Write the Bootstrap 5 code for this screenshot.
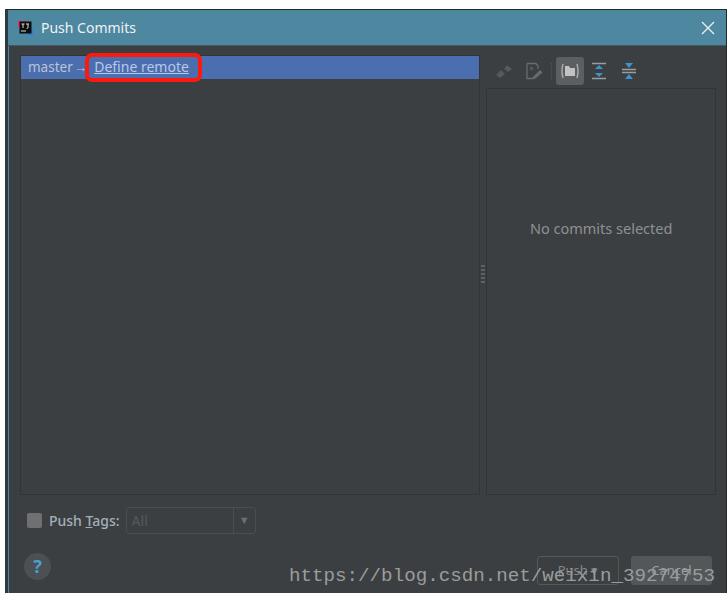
<!DOCTYPE html>
<html lang="en">
<head>
    <meta charset="UTF-8">
    <title>Push Commits</title>
    <link href="https://cdn.jsdelivr.net/npm/bootstrap@5.3.3/dist/css/bootstrap.min.css" rel="stylesheet">
    <style>
        html, body { height: 100%; background: #fff; overflow: hidden; }
        body { padding: 9px 0 0 5px; font-family: "Noto Sans", "Open Sans", sans-serif; font-size: 13px; }
        .ide-window { height: 584px; background: #3c3f41; border: 1px solid #23282b; border-left: 3px solid #2f3a40; border-bottom: 0; color: #bbb; position: relative; box-shadow: inset 1px 0 0 #4e87a0; }
        .ide-title { height: 36px; background: #4e87a0; color: #eef3f5; padding: 0 9px 0 10px; font-size: 14px; border-bottom: 1px solid #46565e; }
        .ide-close { width: 18px; height: 18px; }
        .ide-body { padding: 9px 10px 0 12px; height: 449px; gap: 6px; }
        .ide-tree { width: 461px; background: #3c3f41; border: 1px solid #323537; }
        .ide-row { height: 23px; background: #4b6eaf; color: #b9c4d8; padding-left: 7px; gap: 1px; font-size: 13.5px; }
        .ide-remote { color: #b9c8e6; text-decoration: underline; font-size: 14px; border: 4px solid #fb1a0e; border-radius: 7px; margin: -3px 0 -3px -3px; padding: 0 9px 0 5px; height: 29px; line-height: 20px; position: relative; }
        .ide-side { width: 230px; }
        .ide-tools { height: 33px; padding: 0 0 2px 9px; gap: 12px; }
        .ide-sep { height: 16px; border-left: 1px dotted #555; margin: 0 -8px 0 -4px; }
        .ide-toggle { background: #5b5f62; border-radius: 3px; width: 28px; height: 28px; margin-right: -5px; }
        .ide-last { margin-left: 2px; }
        .ide-details { border: 1px solid #323537; color: #8d9194; font-size: 14.5px; padding-bottom: 126px; }
        .ide-grip { width: 4px; height: 20px; align-self: center; margin: 0 -5px 0 -5px; background: repeating-linear-gradient(#5f6264 0 2px, transparent 2px 4px); }
        .ide-tags { padding: 12px 0 0 19px; height: 58px; gap: 6px; color: #a3b0ba; font-weight: 500; font-size: 14px; }
        .ide-check { width: 15px; height: 15px; background: #6e7072; border-radius: 2px; margin: 6px 1px 0 0; }
        .ide-combo { width: 130px; height: 27px; border: 1px solid #4b4e50; border-radius: 3px; color: #56595b; padding-left: 5px; font-weight: 400; }
        .ide-arrow { width: 22px; height: 100%; border-left: 1px solid #4b4e50; color: #6b6e70; font-size: 11px; }
        .ide-foot { padding: 0 14px 0 16px; height: 40px; }
        .ide-help { width: 27px; height: 27px; border-radius: 50%; background: #4b5054; color: #4a9fd0; font-weight: 700; font-size: 18px; }
        .ide-actions { gap: 12px; margin-top: 3px; }
        .ide-btn { height: 29px; border-radius: 3px; font-size: 13px; padding: 0; }
        .ide-push { width: 82px; border: 1px solid #55585a; background: transparent; color: #85898b; }
        .ide-cancel { width: 81px; background: #53575a; color: #9a9ea0; border: 0; }
        .ide-mark { position: absolute; left: 281px; bottom: 5px; font-family: "Liberation Mono", monospace; font-size: 19.2px; line-height: 24px; color: #9a9c9d; white-space: nowrap; }
        .ide-u { text-decoration: underline; }
    </style>
</head>
<body>
    <div class="ide-window d-flex flex-column">
        <div class="ide-title d-flex align-items-center gap-2">
            <svg width="15" height="15" viewBox="0 0 15 15"><path d="M0 1h8v6H0z" fill="#f0286e"/><path d="M9 9h6v6H9z" fill="#2d7fe0"/><rect x="1.5" y="1.5" width="12" height="12" fill="#0c0c0c"/><rect x="3" y="10.5" width="5" height="1" fill="#ddd"/><path d="M3.500 4h3M5 4v4M8 4h3M10 4v3.500q0 1-1.500 .800" stroke="#ddd" fill="none"/></svg>
            <span class="flex-grow-1">Push Commits</span>
            <svg class="ide-close" viewBox="0 0 18 18"><path d="M3 3l12 12M15 3L3 15" stroke="#e8eef1" stroke-width="1.400"/></svg>
        </div>
        <div class="ide-body d-flex">
            <div class="ide-tree">
                <div class="ide-row d-flex align-items-center">
                    <span>master</span><span>&rarr;</span>
                    <span class="ide-remote">Define remote</span>
                </div>
            </div>
            <div class="ide-grip"></div>
            <div class="ide-side d-flex flex-column">
                <div class="ide-tools d-flex align-items-center">
                    <svg width="18" height="16" viewBox="0 0 18 16"><path d="M1 12l5-5 4 4-5 4zM9 6l3-4 5 4-4 3z" fill="#56595b"/></svg>
                    <svg width="18" height="18" viewBox="0 0 18 18"><path d="M2 1.500h9l2 2.500v3M2 1.500v15h7" stroke="#696c6e" stroke-width="1.300" fill="none"/><path d="M5 5h3v3H5z" fill="#56595b"/><path d="M8 15l7-7 2.500 2.500-7 6H8z" fill="#696c6e"/></svg>
                    <span class="ide-sep"></span>
                    <span class="ide-toggle d-flex align-items-center justify-content-center">
                        <svg width="20" height="16" viewBox="0 0 20 16"><path d="M3 1Q1 8 3 15M17 1Q19 8 17 15" stroke="#aaa" stroke-width="1.500" fill="none"/><path d="M5 3h4l1 2h5v8H5z" fill="#c0c2c3"/></svg>
                    </span>
                    <svg width="16" height="18" viewBox="0 0 16 18"><path d="M1 1.500h14M1 16.500h14" stroke="#9a9c9e" stroke-width="1.600"/><path d="M8 3l4 4H4zM8 15l-4-4h8z" fill="#3d93cf"/></svg>
                    <svg class="ide-last" width="16" height="18" viewBox="0 0 16 18"><path d="M1 7.500h14M1 10.500h14" stroke="#9a9c9e" stroke-width="1.400"/><path d="M4 1h8L8 6zM8 12l4 5H4z" fill="#3d93cf"/></svg>
                </div>
                <div class="ide-details flex-grow-1 d-flex align-items-center justify-content-center">No commits selected</div>
            </div>
        </div>
        <div class="ide-tags d-flex align-items-start">
            <span class="ide-check"></span>
            <span class="lh-lg">Push <span class="ide-u">T</span>ags:</span>
            <div class="ide-combo d-flex align-items-center justify-content-between"><span>All</span><span class="ide-arrow d-flex align-items-center justify-content-center">&#9660;</span></div>
        </div>
        <div class="ide-foot d-flex align-items-start justify-content-between">
            <div class="ide-help d-flex align-items-center justify-content-center">?</div>
            <div class="ide-actions d-flex">
                <button type="button" class="btn ide-btn ide-push">Push &#9662;</button>
                <button type="button" class="btn ide-btn ide-cancel">Cancel</button>
            </div>
        </div>
        <div class="ide-mark">https://blog.csdn.net/weixin_39274753</div>
    </div>
    <script src="https://cdn.jsdelivr.net/npm/bootstrap@5.3.3/dist/js/bootstrap.bundle.min.js"></script>
</body>
</html>
